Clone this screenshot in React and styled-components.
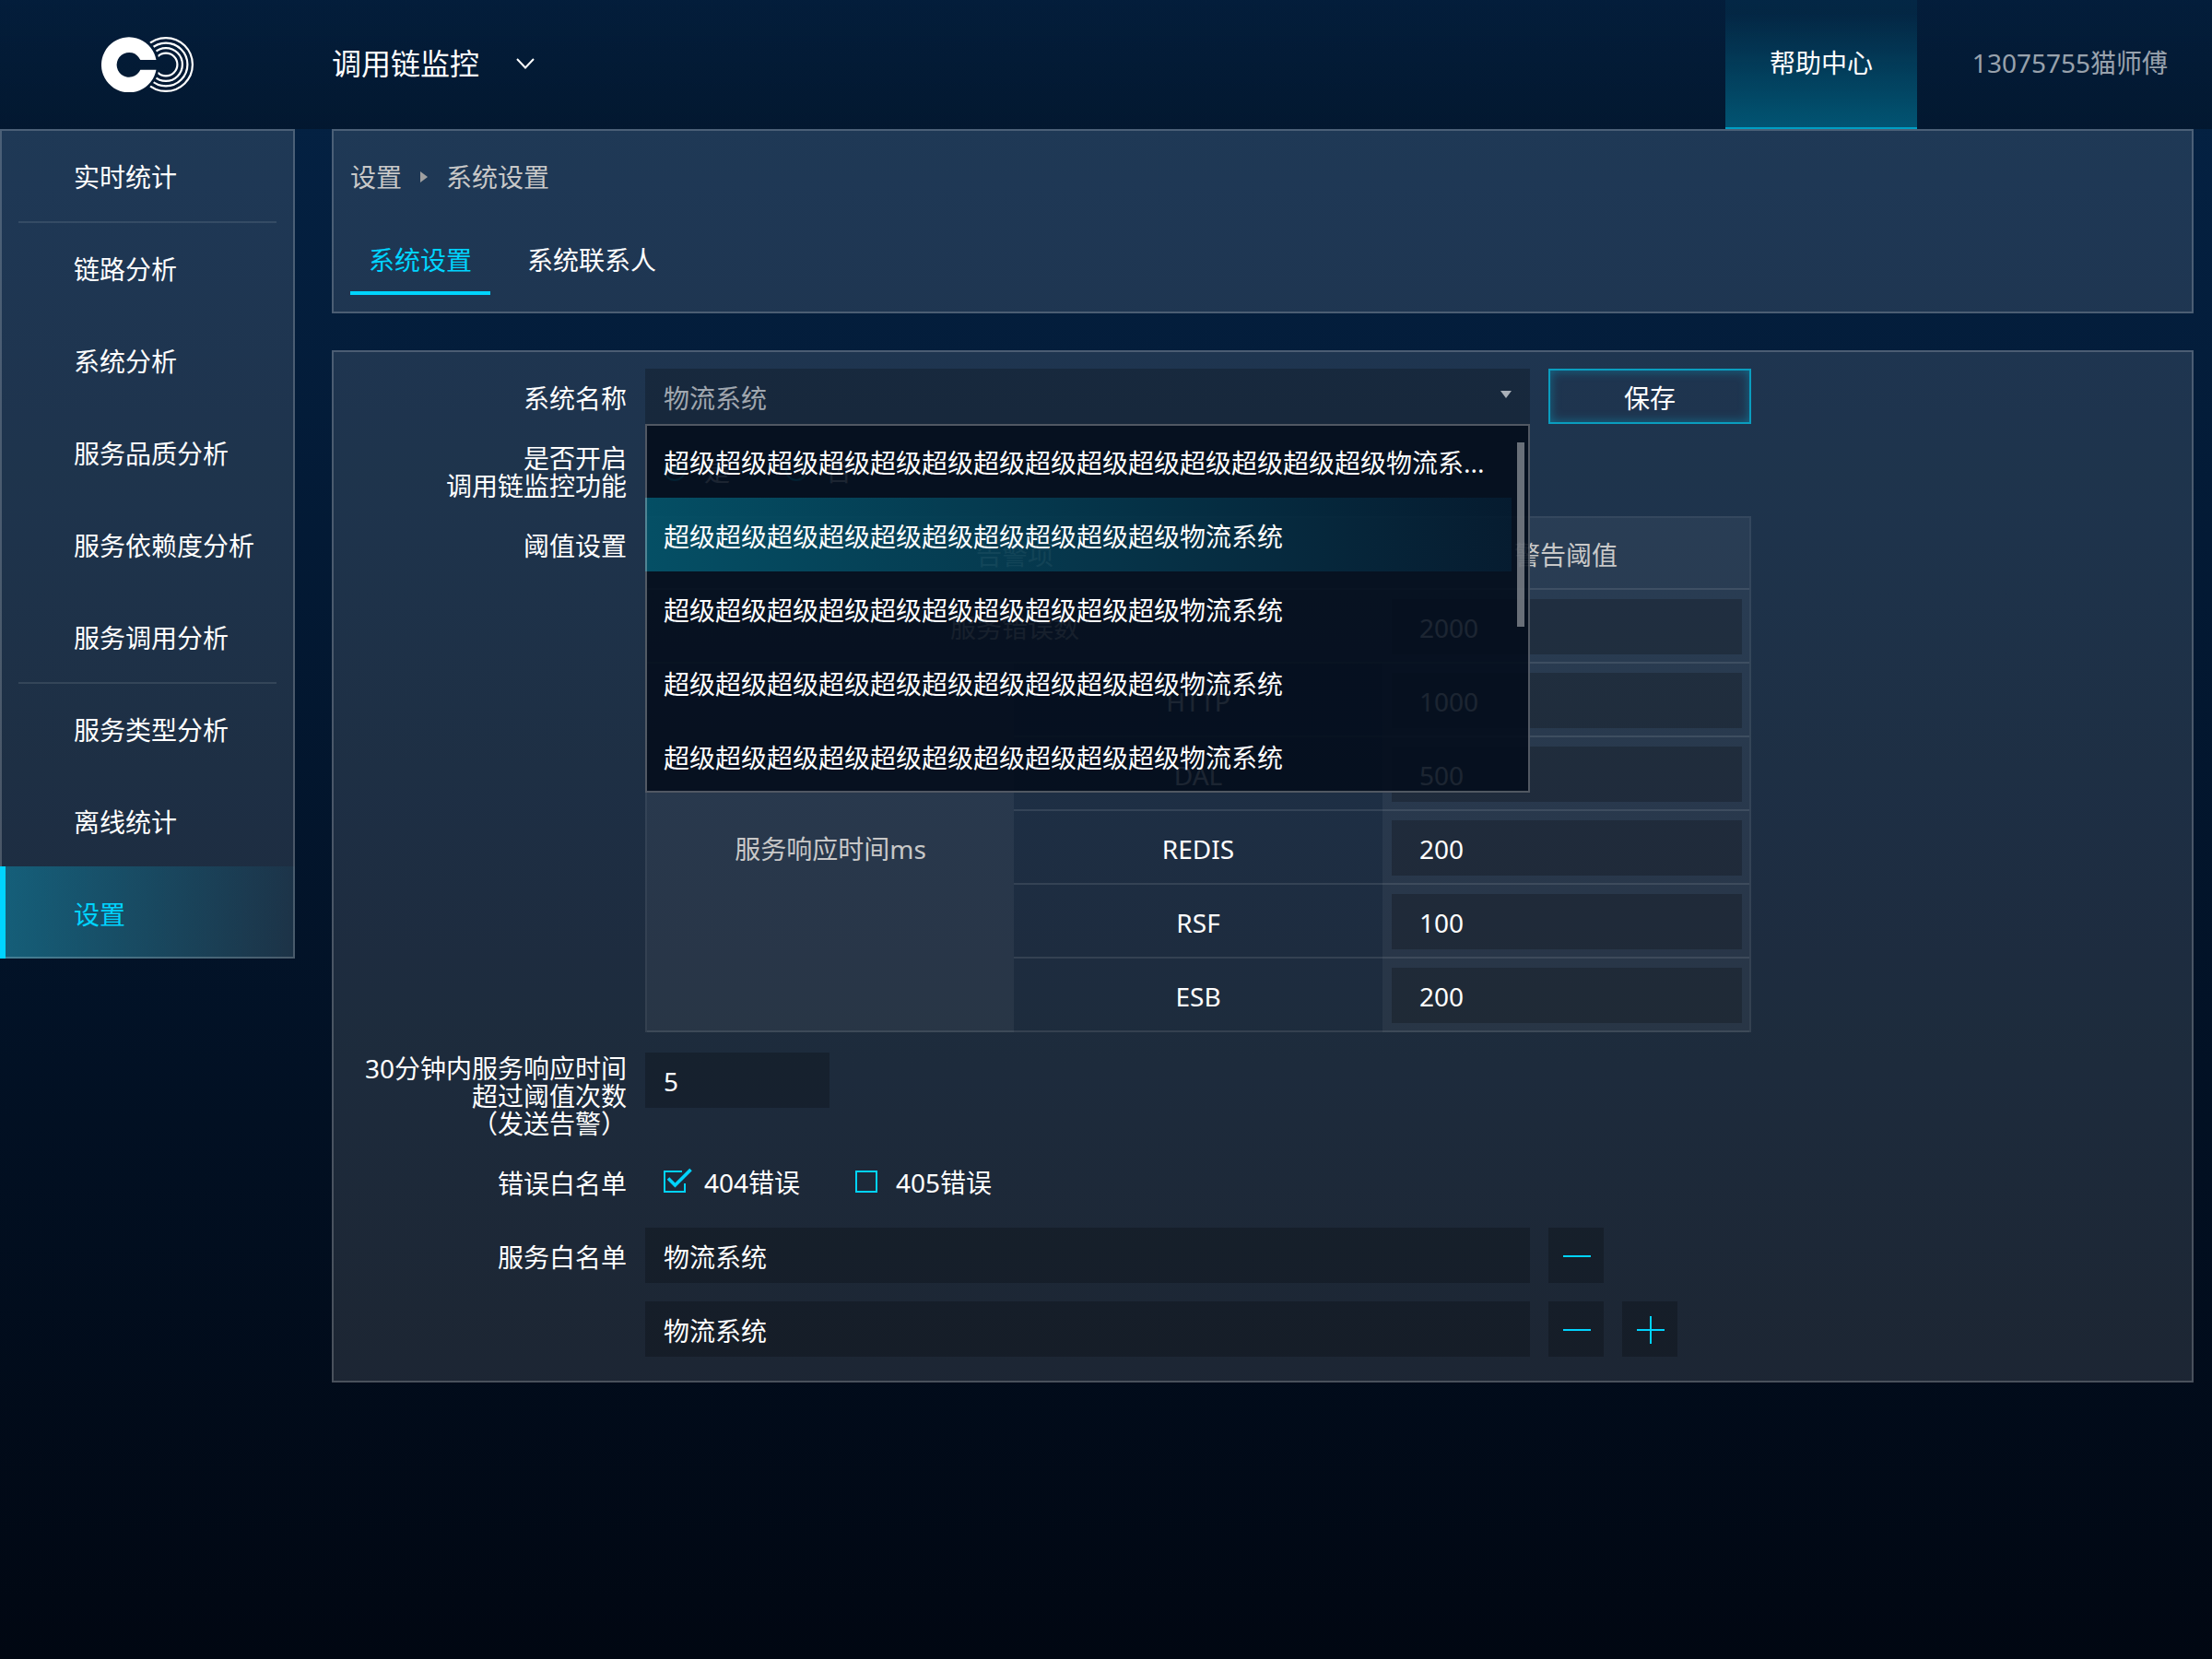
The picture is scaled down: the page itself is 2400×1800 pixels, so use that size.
import React from "react";
import styled, { createGlobalStyle, css } from "styled-components";

const accent = "#00d4ff";
const fontStack = '"Noto Sans", "Noto Sans CJK SC", sans-serif';

const GlobalStyle = createGlobalStyle`
  *, *::before, *::after { box-sizing: border-box; }
  html { background: #010712; }
  body {
    margin: 0;
    min-height: 100vh;
    background: linear-gradient(180deg, #042346 0%, #010712 100%);
    color: #fff;
    font: 400 28px/30px ${fontStack};
  }
  button, input, select { font: inherit; color: inherit; margin: 0; border-radius: 0; }
  a { color: inherit; text-decoration: none; }
  ul, ol { list-style: none; margin: 0; padding: 0; }
`;

/* ---------- header ---------- */

const Header = styled.header`
  display: flex;
  align-items: stretch;
  height: 140px;
  background: linear-gradient(180deg, rgba(0, 0, 0, 0.16), rgba(0, 0, 0, 0.27));
`;

const LogoLink = styled.a`
  display: flex;
  align-items: center;
  width: 360px;
  padding-left: 110px;
`;

const ProductButton = styled.button`
  display: flex;
  align-items: center;
  gap: 40px;
  padding: 0 0 2px;
  border: 0;
  background: none;
  font-size: 32px;
`;

const HeaderLinks = styled.nav`
  display: flex;
  margin-left: auto;
`;

const HelpLink = styled.a`
  display: flex;
  align-items: center;
  padding: 0 48px 2px;
  border-bottom: 2px solid rgba(0, 212, 255, 0.7);
  background: linear-gradient(180deg, rgba(0, 212, 255, 0.05) 10%, rgba(0, 212, 255, 0.32));
`;

const UserLink = styled.a`
  display: flex;
  align-items: center;
  justify-content: flex-end;
  min-width: 320px;
  padding: 0 48px 4px;
  color: rgba(255, 255, 255, 0.6);
`;

/* ---------- frame ---------- */

const Body = styled.div`
  display: flex;
  align-items: flex-start;
  gap: 40px;
  padding-right: 20px;
`;

const frame = css`
  background: rgba(255, 255, 255, 0.11);
  position: relative;
  &::after {
    content: "";
    position: absolute;
    inset: 0;
    border: 2px solid rgba(255, 255, 255, 0.2);
    pointer-events: none;
  }
`;

const Sidebar = styled.nav`
  ${frame}
  flex: 0 0 320px;
`;

const NavLink = styled.a`
  position: relative;
  display: flex;
  align-items: center;
  height: 100px;
  padding: 4px 0 0 80px;

  ${(p) =>
    p.$divided &&
    css`
      &::before {
        content: "";
        position: absolute;
        top: 0;
        left: 20px;
        right: 20px;
        height: 2px;
        background: rgba(255, 255, 255, 0.1);
      }
    `}

  ${(p) =>
    p.$active &&
    css`
      color: ${accent};
      background: linear-gradient(90deg, rgba(0, 212, 255, 0.3), rgba(0, 212, 255, 0.04));
      &::before {
        content: "";
        position: absolute;
        z-index: 1;
        inset: 0 auto 0 0;
        width: 6px;
        background: ${accent};
      }
    `}
`;

const Main = styled.main`
  flex: 1;
  min-width: 0;
  display: flex;
  flex-direction: column;
  gap: 40px;
`;

const Panel = styled.section`
  ${frame}
  padding: 20px 20px ${(p) => p.$bottom}px;
`;

const Breadcrumb = styled.ol`
  display: flex;
  align-items: center;
  gap: 20px;
  height: 64px;
  color: #c8c8c8;
`;

const Crumb = styled.li`
  display: flex;
  align-items: center;
  gap: 20px;
  & + &::before {
    content: "";
    border: solid transparent;
    border-width: 6px 0 6px 8px;
    border-left-color: #a0a0a0;
  }
`;

const Tabs = styled.div`
  display: flex;
  gap: 20px;
  margin-top: 20px;
`;

const Tab = styled.button`
  height: 76px;
  padding: 4px 20px 0;
  border: 0;
  border-bottom: 4px solid ${(p) => (p.$active ? accent : "transparent")};
  background: none;
  color: ${(p) => (p.$active ? accent : "#fff")};
`;

/* ---------- form ---------- */

const Form = styled.form`
  display: grid;
  grid-template-columns: 300px minmax(0, 1fr);
  gap: 20px;
`;

const Label = styled.label`
  display: flex;
  align-items: center;
  justify-content: flex-end;
  height: ${(p) => p.$lines * 30}px;
  padding-top: 4px;
  text-align: right;
  white-space: pre-line;
`;

const Fields = styled.div`
  display: flex;
  gap: 20px;
`;

const Stack = styled.div`
  display: flex;
  flex-direction: column;
  gap: 20px;
`;

const box = css`
  height: 60px;
  border: 0;
  outline: 0;
  background: rgba(0, 0, 0, 0.22);
`;

const TextInput = styled.input`
  ${box}
  display: block;
  width: ${(p) => p.$width || "100%"};
  padding: 2px ${(p) => p.$inset || 20}px 0;
`;

const SelectBox = styled.div`
  position: relative;
  width: 960px;
  &::before {
    content: "";
    position: absolute;
    top: 24px;
    right: 20px;
    border: solid transparent;
    border-width: 8px 6px 0;
    border-top-color: #a9b0b8;
  }
`;

const Select = styled.select`
  ${box}
  width: 100%;
  padding: 4px 20px 0;
  appearance: none;
  color: rgba(255, 255, 255, 0.6);
`;

const Menu = styled.ul`
  position: absolute;
  z-index: 2;
  top: 100%;
  left: 0;
  right: 0;
  padding-right: 20px;
  background: rgba(3, 13, 28, 0.9);
  &::after {
    content: "";
    position: absolute;
    inset: 0;
    border: 2px solid rgba(255, 255, 255, 0.3);
    pointer-events: none;
  }
`;

const MenuItem = styled.li`
  display: flex;
  align-items: center;
  height: 80px;
  padding: 4px 20px 0;
  white-space: nowrap;
  background: ${(p) =>
    p.$active
      ? "linear-gradient(90deg, rgba(0, 204, 240, 0.33), rgba(0, 130, 200, 0.09))"
      : "none"};
`;

const Thumb = styled.li`
  position: absolute;
  top: 20px;
  right: 6px;
  width: 8px;
  height: 200px;
  background: rgba(255, 255, 255, 0.4);
`;

const SaveButton = styled.button`
  width: 220px;
  height: 60px;
  padding: 4px 0 0;
  border: 2px solid #0a9dbf;
  background: none;
  box-shadow: inset 0 0 12px rgba(0, 212, 255, 0.35);
`;

const SquareButton = styled.button`
  ${box}
  display: grid;
  place-items: center;
  width: 60px;
  padding: 0;
  color: ${accent};
`;

const Choices = styled.div`
  display: flex;
  align-items: center;
  gap: 60px;
  height: 60px;
  padding-left: 20px;
`;

const Choice = styled.label`
  position: relative;
  display: flex;
  align-items: center;
  gap: 20px;
  input {
    position: absolute;
    width: 24px;
    height: 24px;
    opacity: 0;
  }
`;

const ChoiceText = styled.span`
  padding-top: 2px;
`;

const Mark = styled.svg`
  display: block;
  width: 24px;
  height: 24px;
  overflow: visible;
  fill: none;
  stroke: ${accent};
  stroke-width: 2;
`;

/* ---------- threshold table ---------- */

const TableWrap = styled.div`
  padding-bottom: 2px;
`;

const Table = styled.table`
  width: 1200px;
  table-layout: fixed;
  border: 2px solid rgba(255, 255, 255, 0.1);
  border-bottom: 0;
  border-collapse: separate;
  border-spacing: 0;
  text-align: center;
`;

const cell = css`
  height: 80px;
  padding: 4px 0 0;
  border-bottom: 2px solid rgba(255, 255, 255, 0.1);
  font-weight: 400;
`;

const HeadCell = styled.th`
  ${cell}
  height: ${(p) => (p.$top ? 78 : 80)}px;
  background: rgba(255, 255, 255, 0.05);
  color: #c8c8c8;
`;

const NameCell = styled.td`
  ${cell}
`;

const ValueCell = styled.td`
  ${cell}
  padding: 10px 8px 8px 10px;
  background: rgba(255, 255, 255, 0.05);
`;

/* ---------- drawings ---------- */

function Logo() {
  return (
    <svg width="100" height="60" viewBox="0 0 100 60" fill="none" role="img" aria-label="Logo">
      <mask id="cut">
        <rect width="100" height="60" fill="#fff" />
        <circle cx="30" cy="30" r="33" fill="#000" />
      </mask>
      <path
        d="M59.5 35.7A30 30 0 1 1 59.5 25H42.3A13.4 13.4 0 1 0 42.3 35.7Z"
        fill="#fff"
      />
      <g mask="url(#cut)" stroke="#fff" strokeWidth="2.2">
        <circle cx="70" cy="30" r="28.9" />
        <circle cx="70" cy="30" r="23.4" />
        <circle cx="70" cy="30" r="17.9" />
        <circle cx="70" cy="30" r="12.4" />
      </g>
    </svg>
  );
}

const Chevron = () => (
  <svg width="20" height="12" viewBox="0 0 20 12" fill="none" stroke="#fff" strokeWidth="2">
    <path d="M1 1L10 10.5L19 1" />
  </svg>
);

const SignIcon = ({ plus }) => (
  <svg width="32" height="32" viewBox="0 0 32 32" fill="none" stroke="currentColor" strokeWidth="2">
    <path d={plus ? "M2 17H32M17 2V32" : "M2 17H32"} />
  </svg>
);

function Check({ checked, children }) {
  return (
    <Choice>
      <input type="checkbox" defaultChecked={checked} />
      <Mark viewBox="0 0 24 24">
        {checked ? (
          <>
            <path d="M20 1H1V23H23V14" />
            <path d="M5 8.500L12.500 16L29.500 -1" strokeWidth="3.600" />
          </>
        ) : (
          <rect x="1" y="1" width="22" height="22" />
        )}
      </Mark>
      <ChoiceText>{children}</ChoiceText>
    </Choice>
  );
}

function Radio({ checked, children }) {
  return (
    <Choice>
      <input type="radio" name="monitoring" defaultChecked={checked} />
      <Mark viewBox="0 0 24 24">
        <circle cx="12" cy="12" r="11" />
        {checked && <circle cx="12" cy="12" r="6" fill={accent} stroke="none" />}
      </Mark>
      <ChoiceText>{children}</ChoiceText>
    </Choice>
  );
}

/* ---------- data ---------- */

const navItems = [
  { text: "实时统计" },
  { text: "链路分析", divided: true },
  { text: "系统分析" },
  { text: "服务品质分析" },
  { text: "服务依赖度分析" },
  { text: "服务调用分析" },
  { text: "服务类型分析", divided: true },
  { text: "离线统计" },
  { text: "设置", active: true },
];

const systemName = "超级超级超级超级超级超级超级超级超级超级物流系统";
const systems = [
  "超级超级超级超级超级超级超级超级超级超级超级超级超级超级物流系...",
  systemName,
  systemName,
  systemName,
  systemName,
];

const responseTimes = [
  ["HTTP", "1000"],
  ["DAL", "500"],
  ["REDIS", "200"],
  ["RSF", "100"],
  ["ESB", "200"],
];

export default function App() {
  return (
    <>
      <GlobalStyle />
      <Header>
        <LogoLink href="#">
          <Logo />
        </LogoLink>
        <ProductButton type="button">
          调用链监控
          <Chevron />
        </ProductButton>
        <HeaderLinks>
          <HelpLink href="#">帮助中心</HelpLink>
          <UserLink href="#">13075755猫师傅</UserLink>
        </HeaderLinks>
      </Header>

      <Body>
        <Sidebar>
          {navItems.map((item) => (
            <NavLink key={item.text} href="#" $divided={item.divided} $active={item.active}>
              {item.text}
            </NavLink>
          ))}
        </Sidebar>

        <Main>
          <Panel $bottom={20}>
            <Breadcrumb>
              <Crumb>设置</Crumb>
              <Crumb>系统设置</Crumb>
            </Breadcrumb>
            <Tabs role="tablist">
              <Tab type="button" role="tab" aria-selected="true" $active>
                系统设置
              </Tab>
              <Tab type="button" role="tab" aria-selected="false">
                系统联系人
              </Tab>
            </Tabs>
          </Panel>

          <Panel $bottom={28}>
            <Form>
              <Label $lines={2} htmlFor="system">
                系统名称
              </Label>
              <Fields>
                <SelectBox>
                  <Select id="system">
                    <option>物流系统</option>
                  </Select>
                  <Menu role="listbox">
                    {systems.map((name, i) => (
                      <MenuItem key={i} role="option" aria-selected={i === 1} $active={i === 1}>
                        {name}
                      </MenuItem>
                    ))}
                    <Thumb role="presentation" />
                  </Menu>
                </SelectBox>
                <SaveButton type="button">保存</SaveButton>
              </Fields>

              <Label as="div" $lines={2}>
                {"是否开启\n调用链监控功能"}
              </Label>
              <Choices role="radiogroup">
                <Radio checked>是</Radio>
                <Radio>否</Radio>
              </Choices>

              <Label as="div" $lines={2}>
                阈值设置
              </Label>
              <TableWrap>
                <Table>
                  <colgroup>
                    <col width="398" />
                    <col width="400" />
                    <col width="398" />
                  </colgroup>
                  <thead>
                    <tr>
                      <HeadCell $top colSpan={2}>
                        告警项
                      </HeadCell>
                      <HeadCell $top>警告阈值</HeadCell>
                    </tr>
                  </thead>
                  <tbody>
                    <tr>
                      <HeadCell scope="row" colSpan={2}>
                        服务错误数
                      </HeadCell>
                      <ValueCell>
                        <TextInput aria-label="服务错误数" $inset={30} defaultValue="2000" />
                      </ValueCell>
                    </tr>
                    {responseTimes.map(([name, value], i) => (
                      <tr key={name}>
                        {i === 0 && (
                          <HeadCell scope="rowgroup" rowSpan={responseTimes.length}>
                            服务响应时间ms
                          </HeadCell>
                        )}
                        <NameCell>{name}</NameCell>
                        <ValueCell>
                          <TextInput aria-label={name} $inset={30} defaultValue={value} />
                        </ValueCell>
                      </tr>
                    ))}
                  </tbody>
                </Table>
              </TableWrap>

              <Label $lines={3} htmlFor="times">
                {"30分钟内服务响应时间\n超过阈值次数\n（发送告警）"}
              </Label>
              <Fields>
                <TextInput id="times" $width="200px" defaultValue="5" />
              </Fields>

              <Label as="div" $lines={2}>
                错误白名单
              </Label>
              <Choices>
                <Check checked>404错误</Check>
                <Check>405错误</Check>
              </Choices>

              <Label $lines={2} htmlFor="service">
                服务白名单
              </Label>
              <Stack>
                <Fields>
                  <TextInput id="service" $width="960px" defaultValue="物流系统" />
                  <SquareButton type="button" aria-label="删除">
                    <SignIcon />
                  </SquareButton>
                </Fields>
                <Fields>
                  <TextInput aria-label="服务白名单" $width="960px" defaultValue="物流系统" />
                  <SquareButton type="button" aria-label="删除">
                    <SignIcon />
                  </SquareButton>
                  <SquareButton type="button" aria-label="添加">
                    <SignIcon plus />
                  </SquareButton>
                </Fields>
              </Stack>
            </Form>
          </Panel>
        </Main>
      </Body>
    </>
  );
}
